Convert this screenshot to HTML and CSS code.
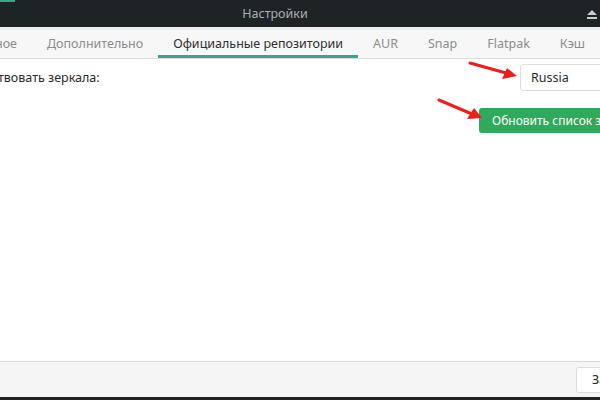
FILE: index.html
```html
<!DOCTYPE html>
<html lang="ru">
<head>
<meta charset="utf-8">
<link rel="stylesheet" href="styles.css">
</head>
<body>
<div class="window">
  <div class="titlebar">
    <div class="topline"></div>
    <div class="title">Настройки</div>
    <svg class="eject" width="10" height="9" viewBox="0 0 10 9"><path d="M5 0 L10 5 L0 5 Z" fill="#c8cccf"/><rect x="0" y="7" width="10" height="2" fill="#c8cccf"/></svg>
  </div>
  <div class="strip"></div>
  <div class="tabs">
    <div class="tab first">ное</div>
    <div class="tab">Дополнительно</div>
    <div class="tab active">Официальные репозитории</div>
    <div class="tab">AUR</div>
    <div class="tab">Snap</div>
    <div class="tab">Flatpak</div>
    <div class="tab">Кэш</div>
  </div>
  <div class="content">
    <div class="row">
      <div class="label">твовать зеркала:</div>
      <div class="select">Russia</div>
    </div>
    <div class="row2">
      <div class="btn-green">Обновить список зеркал</div>
    </div>
    <svg class="arrows" width="600" height="100" viewBox="0 0 600 100">
      <g stroke="#e8201c" stroke-width="3" stroke-linecap="round">
        <line x1="470" y1="4" x2="506" y2="14"/>
        <line x1="439" y1="41" x2="472" y2="55"/>
      </g>
      <g fill="#e8201c">
        <polygon points="517,17 502,20 507,9"/>
        <polygon points="482,59 467,60 474,49"/>
      </g>
    </svg>
  </div>
  <div class="footer">
    <div class="btn-close">Закрыть</div>
  </div>
  <div class="bottom"></div>
</div>
</body>
</html>
```
FILE: styles.css
```css
html, body {
  margin: 0;
  padding: 0;
  width: 600px;
  height: 400px;
  overflow: hidden;
  background: #ffffff;
  font-family: "Noto Sans", "Open Sans", sans-serif;
}
.window {
  display: flex;
  flex-direction: column;
  width: 600px;
  height: 400px;
}
.titlebar {
  position: relative;
  height: 27px;
  background: #1e2326;
  display: flex;
  align-items: center;
  justify-content: center;
  flex-shrink: 0;
}
.topline {
  position: absolute;
  left: 0;
  top: 0;
  width: 15px;
  height: 2px;
  background: #35a68b;
}
.title {
  color: #a9aeb2;
  font-size: 12.5px;
  margin-left: -50px;
}
.eject {
  position: absolute;
  right: 3px;
  top: 10px;
}
.strip {
  height: 3px;
  background: #eceeef;
  flex-shrink: 0;
}
.tabs {
  height: 28px;
  background: #f7f7f7;
  border-bottom: 1px solid #dcdcdc;
  display: flex;
  flex-shrink: 0;
  white-space: nowrap;
  overflow: hidden;
}
.tab {
  padding: 0 15px;
  font-size: 12.5px;
  color: #8c8c8c;
  line-height: 27px;
  border-bottom: 3px solid transparent;
  height: 25px;
}
.tab.first {
  padding-left: 0;
  margin-left: -5px;
}
.tab.active {
  color: #2f2f2f;
  border-bottom-color: #35a68b;
}
.content {
  position: relative;
  flex: 1;
  background: #ffffff;
  overflow: hidden;
}
.row {
  display: flex;
  justify-content: space-between;
  align-items: center;
  margin-top: 5px;
  height: 27px;
}
.label {
  font-size: 12.5px;
  color: #2a2a2a;
  margin-left: -2px;
}
.select {
  width: 80px;
  height: 25px;
  margin-right: -12px;
  border: 1px solid #dedede;
  border-radius: 3px;
  font-size: 12.5px;
  color: #2a2a2a;
  line-height: 25px;
  padding-left: 10px;
  background: #ffffff;
}
.row2 {
  display: flex;
  justify-content: flex-end;
  margin-top: 17px;
}
.btn-green {
  width: 110px;
  height: 25px;
  margin-right: -2px;
  background: #31a95c;
  border-radius: 3px;
  color: #ffffff;
  font-size: 12px;
  line-height: 25px;
  padding-left: 13px;
  white-space: nowrap;
  overflow: hidden;
}
.arrows {
  position: absolute;
  left: 0;
  top: 0;
}
.footer {
  height: 35px;
  background: #f5f5f5;
  border-top: 1px solid #d8d8d8;
  display: flex;
  justify-content: flex-end;
  align-items: center;
  flex-shrink: 0;
  overflow: hidden;
}
.btn-close {
  width: 70px;
  height: 24px;
  margin-right: -63px;
  border: 1px solid #dcdcdc;
  border-radius: 3px;
  background: #ffffff;
  font-size: 12.5px;
  color: #2a2a2a;
  line-height: 24px;
  padding-left: 15px;
  white-space: nowrap;
}
.bottom {
  height: 3px;
  background: #1e2326;
  flex-shrink: 0;
}
```
